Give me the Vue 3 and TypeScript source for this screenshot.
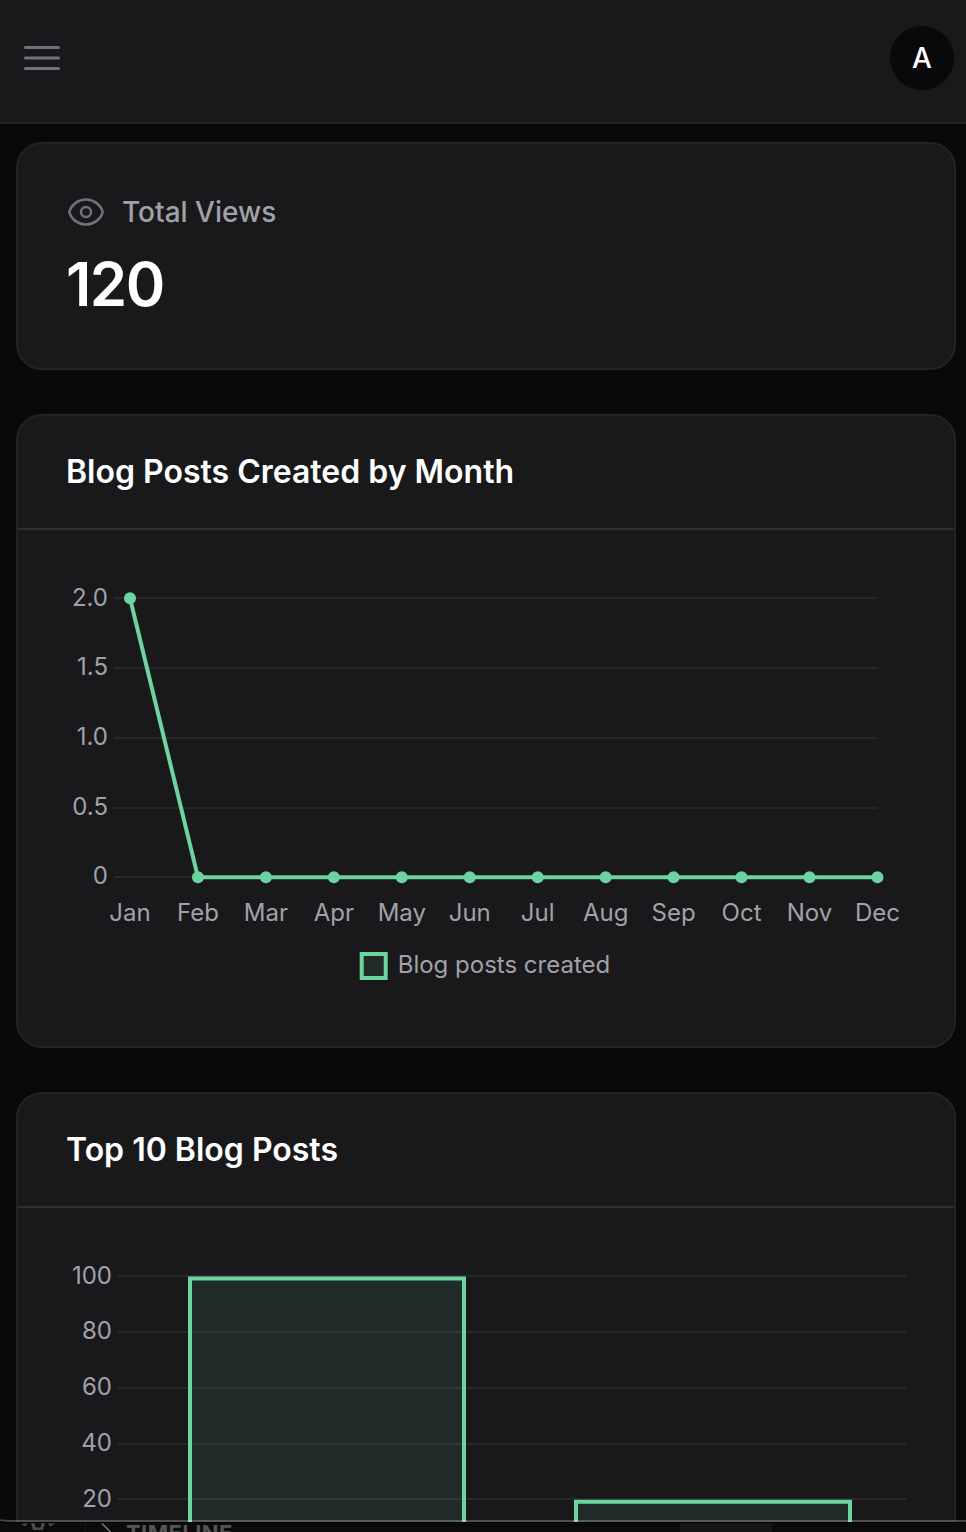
<script setup lang="ts">
interface Tick {
  label: string
  y: number
  base: number
}

interface Bar {
  x: number
  y: number
  width: number
}

const lineTicks: Tick[] = [
  { label: '2.0', y: 68, base: 76 },
  { label: '1.5', y: 138, base: 145 },
  { label: '1.0', y: 208, base: 215 },
  { label: '0.5', y: 278, base: 285 },
  { label: '0', y: 347, base: 354 },
]

const months = ['Jan', 'Feb', 'Mar', 'Apr', 'May', 'Jun', 'Jul', 'Aug', 'Sep', 'Oct', 'Nov', 'Dec']
const counts = [2, 0, 0, 0, 0, 0, 0, 0, 0, 0, 0, 0]
const points = months.map((label, i) => ({
  label,
  x: 112 + i * 67.95,
  y: 347.3 - counts[i] * 139.5,
}))
const linePath = points.map((p) => `${p.x},${p.y}`).join(' ')

const barTicks: Tick[] = [
  { label: '100', y: 68, base: 76 },
  { label: '80', y: 124, base: 131 },
  { label: '60', y: 180, base: 187 },
  { label: '40', y: 236, base: 243 },
  { label: '20', y: 291, base: 299 },
]

const bars: Bar[] = [
  { x: 170, y: 68.5, width: 278 },
  { x: 556, y: 291.7, width: 278 },
]
</script>

<template>
  <div class="screen">
    <div class="app">
      <header class="topbar">
        <svg class="menu" viewBox="0 0 24 24" fill="none" stroke="currentColor" stroke-width="1.5" stroke-linecap="round">
          <path d="M3.75 6.75h16.5M3.75 12h16.5M3.75 17.25h16.5" />
        </svg>
        <div class="avatar">A</div>
      </header>

      <main class="content">
        <section class="card stat">
          <div class="stat-label">
            <svg class="eye" viewBox="0 0 24 24" fill="none" stroke="currentColor" stroke-width="1.5" stroke-linecap="round" stroke-linejoin="round">
              <path d="M2.036 12.322a1.012 1.012 0 010-.639C3.423 7.51 7.36 4.5 12 4.5c4.638 0 8.573 3.007 9.963 7.178.07.207.07.431 0 .639C20.577 16.49 16.64 19.5 12 19.5c-4.638 0-8.573-3.007-9.963-7.178z" />
              <path d="M15 12a3 3 0 11-6 0 3 3 0 016 0z" />
            </svg>
            <span>Total Views</span>
          </div>
          <div class="stat-value">120</div>
        </section>

        <section class="card">
          <h2 class="card-title">Blog Posts Created by Month</h2>
          <svg class="chart" width="936" height="516" viewBox="0 0 936 516">
            <g v-for="t in lineTicks" :key="t.label">
              <line class="grid" x1="96" x2="859.5" :y1="t.y" :y2="t.y" />
              <text class="tick" x="90" :y="t.base" text-anchor="end">{{ t.label }}</text>
            </g>
            <polyline class="series" :points="linePath" />
            <g v-for="p in points" :key="p.label">
              <circle class="dot" :cx="p.x" :cy="p.y" r="6" />
              <text class="tick" :x="p.x" y="391" text-anchor="middle">{{ p.label }}</text>
            </g>
            <rect class="bar" x="343.7" y="424" width="24" height="24" />
            <text class="tick" x="379.7" y="443">Blog posts created</text>
          </svg>
        </section>

        <section class="card">
          <h2 class="card-title">Top 10 Blog Posts</h2>
          <svg class="chart" width="936" height="516" viewBox="0 0 936 516">
            <g v-for="t in barTicks" :key="t.label">
              <line class="grid" x1="100" x2="888" :y1="t.y" :y2="t.y" />
              <text class="tick" x="94" :y="t.base" text-anchor="end">{{ t.label }}</text>
            </g>
            <g v-for="b in bars" :key="b.x">
              <rect class="bar-fill" :x="b.x" :y="b.y" :width="b.width" :height="348 - b.y" />
              <path class="series" :d="`M${b.x + 2} 348V${b.y + 2}H${b.x + b.width - 2}V348`" />
            </g>
          </svg>
        </section>
      </main>
      <div class="window-edge"></div>
    </div>

    <footer class="editor">
      <div class="activity">
        <svg class="gear" width="36" height="9" viewBox="0 0 36 9">
          <path d="M1 1L8 0L5 3.5zM11 0h3.5l1 4.5h5l1-4.5H25L23 7H13zM28 0l7 1-5 2.5z" />
        </svg>
      </div>
      <svg class="chevron" width="14" height="9" viewBox="0 0 14 9">
        <path d="M2 0.5L10.5 9" />
      </svg>
      <span class="timeline">TIMELINE</span>
      <span class="block"></span>
    </footer>
  </div>
</template>

<style>
body {
  margin: 0;
  background: #09090b;
}
</style>

<style scoped>
.screen {
  height: 1532px;
  overflow: hidden;
  display: flex;
  flex-direction: column;
  background: #000;
  font-family: Inter, "Liberation Sans", sans-serif;
  color: #fff;
}

.app {
  position: relative;
  height: 1522px;
  flex: none;
  overflow: hidden;
  background: #09090b;
}

.window-edge {
  position: absolute;
  inset: 0 -20px 0 -8px;
  border-bottom: 2px solid rgba(255, 255, 255, 0.24);
  border-bottom-left-radius: 18px 6px;
  pointer-events: none;
}

.topbar {
  box-sizing: border-box;
  height: 124px;
  padding: 0 12px 6px 18px;
  display: flex;
  align-items: center;
  justify-content: space-between;
  background: #19191b;
  border-bottom: 2px solid #232325;
}

.menu {
  width: 48px;
  height: 48px;
  color: #71717a;
}

.avatar {
  width: 64px;
  height: 64px;
  border-radius: 50%;
  display: flex;
  align-items: center;
  justify-content: center;
  background: #09090b;
  font-size: 28px;
  font-weight: 500;
}

.content {
  display: flex;
  flex-direction: column;
  gap: 44px;
  padding: 18px 10px 0 16px;
}

.card {
  box-sizing: border-box;
  border: 2px solid #232325;
  border-radius: 26px;
  background: #19191b;
  overflow: hidden;
}

.stat {
  height: 228px;
  padding: 48px;
}

.stat-label {
  display: flex;
  align-items: center;
  gap: 16px;
  height: 40px;
  color: #a1a1aa;
  font-size: 28px;
  font-weight: 500;
}

.eye {
  width: 40px;
  height: 40px;
  color: #71717a;
}

.stat-value {
  margin-top: 16px;
  font-size: 60px;
  line-height: 72px;
  font-weight: 600;
  letter-spacing: -1.5px;
}

.card-title {
  box-sizing: border-box;
  height: 114px;
  margin: 0;
  padding: 32px 48px;
  border-bottom: 2px solid #2f2f31;
  font-size: 32px;
  line-height: 48px;
  font-weight: 600;
}

.chart {
  display: block;
}

.grid {
  stroke: #28282a;
  stroke-width: 2;
}

.tick {
  fill: #a1a1aa;
  font-size: 24px;
}

.series {
  fill: none;
  stroke: #6dd3a0;
  stroke-width: 4;
}

.dot {
  fill: #6dd3a0;
}

.bar {
  fill: #222b28;
  stroke: #6dd3a0;
  stroke-width: 4;
}

.bar-fill {
  fill: rgba(109, 211, 160, 0.1);
}

.editor {
  box-sizing: border-box;
  height: 10px;
  border-top: 1px solid #000;
  display: flex;
  align-items: flex-start;
  background: #0b0b0b;
  overflow: hidden;
}

.activity {
  box-sizing: border-box;
  width: 86px;
  height: 9px;
  padding-left: 20px;
  border-right: 1px solid #161616;
}

.gear {
  display: block;
  fill: #4b4b4b;
}

.chevron {
  margin-left: 14px;
  fill: none;
  stroke: #777;
  stroke-width: 1.5;
}

.timeline {
  margin: 2px 0 0 12px;
  font-size: 22px;
  line-height: 16px;
  font-weight: 700;
  letter-spacing: 0.4px;
  color: #555;
}

.block {
  width: 92px;
  height: 9px;
  margin-left: auto;
  margin-right: 194px;
  background: #161616;
}
</style>
